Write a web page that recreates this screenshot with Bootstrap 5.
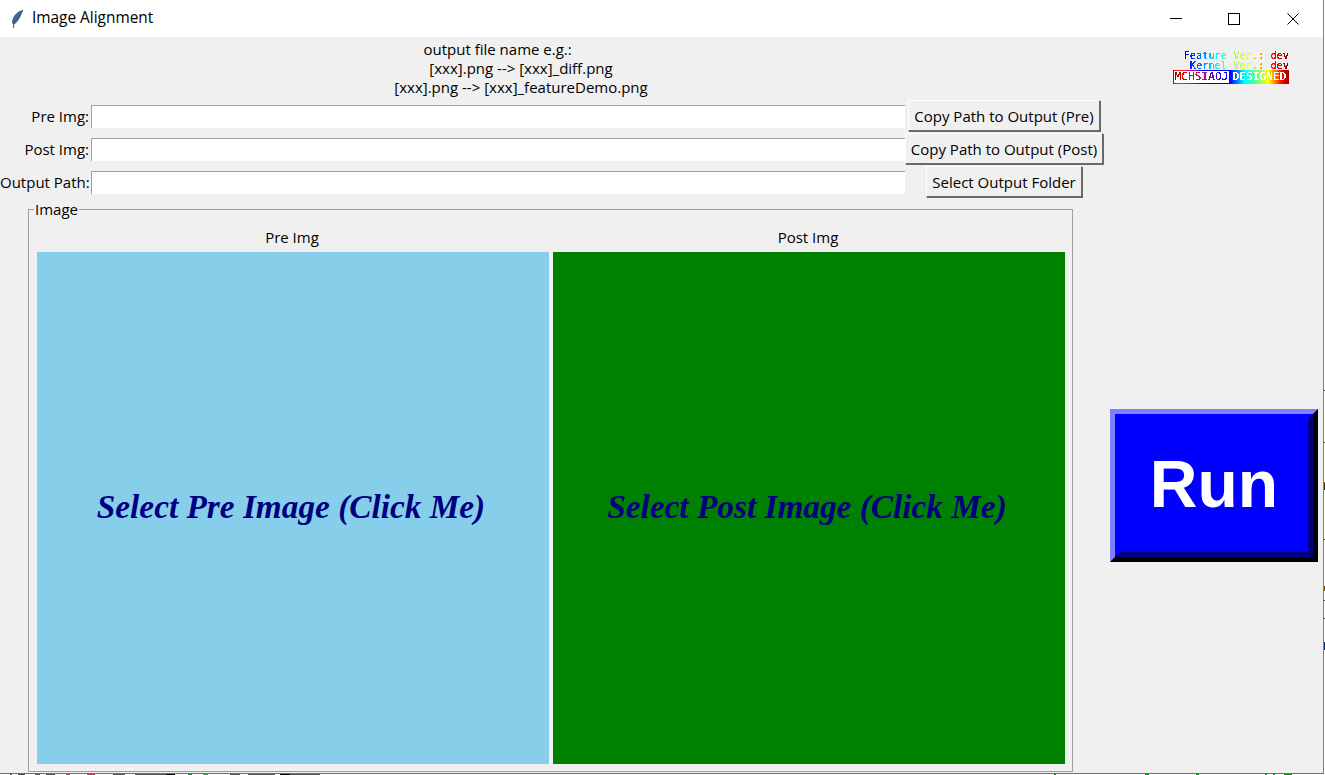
<!DOCTYPE html>
<html lang="en">
<head>
<meta charset="utf-8">
<title>Image Alignment</title>
<link href="https://cdn.jsdelivr.net/npm/bootstrap@5.3.0/dist/css/bootstrap.min.css" rel="stylesheet">
<style>
html,body{margin:0;height:775px;overflow:hidden}
html{background:#fff}
body{font-family:"Open Sans","Noto Sans",sans-serif;font-size:15px;line-height:19px;color:#000;background:#fff linear-gradient(180deg,#fff 0 390px,#333 390px 391px,#fff 391px 442px,#333 442px 443px,#fff 443px 482px,#a06020 482px 483px,#333 483px 490px,#fff 490px 539px,#333 539px 540px,#fff 540px 586px,#805010 586px 591px,#fff 591px 600px,#333 600px 601px,#fff 601px 618px,#333 618px 619px,#fff 619px 642px,#103070 642px 650px,#fff 650px) no-repeat 1324px 0/1px 775px}
.app-window{width:1324px;height:774px;border-right:1px solid #808080;border-bottom:1px solid #707070;background:#f0f0f0}
.title-bar{height:37px;background:#fff;padding-left:10px}
.title-text{margin-left:8px;font-size:15.4px;padding-bottom:2px}
.win-btn{width:58px;height:37px}
.win-close{width:60px}
.client{height:736px}
.left-pane{width:1107px}
.note-area{height:60px;padding-top:3px;padding-left:391px;width:260px;box-sizing:content-box}
.note-line{white-space:nowrap;text-align:center;height:19px;display:flex;justify-content:center}
.form-line{height:33px}
.form-label-text{width:91px;text-align:right;padding-right:2px;white-space:nowrap}
.path-input{width:814px;height:23px;background:#fff;border:0;border-left:1px solid #a0a0a0;border-top:1px solid #a0a0a0;padding:0;border-radius:0}
.tk-btn{height:31px;background:#f0f0f0;border:1px solid;border-color:#fff #696969 #696969 #fff;box-shadow:1px 1px 0 #696969;font-size:15px;line-height:19px;padding:1px 0 0;color:#000;border-radius:0;white-space:nowrap}
.slot{width:198px}
.btn-pre{width:192px}
.btn-post{width:199px}
.btn-out{width:156px}
.img-group{width:1045px;height:563px;margin-left:28px;margin-top:10px;border:1px solid #a0a0a0;padding:0 7px 7px 8px}
.group-legend{margin-top:-10px;margin-left:-3px;padding:0 1px;background:#f0f0f0;width:fit-content;height:19px}
.img-col{width:512px}
.img-col-title{height:33px;padding:9px 2px 0 0;text-align:center}
.img-face{width:512px;height:512px;padding:0 4px 4px 0;font-family:"Liberation Serif",serif;font-weight:700;font-style:italic;font-size:33.3px;color:#000080;cursor:pointer}
.face-pre{background:#87ceeb}
.face-post{background:#008000}
.right-pane{width:216px}
.logo-box{width:116px;margin-left:66px;margin-top:13px;font-family:"DejaVu Sans Mono",monospace;font-size:10.3px;height:34px}
.logo-text{background:linear-gradient(90deg,#00008f,#0000ff 12%,#00ffff 38%,#80ff80 50%,#ffff00 65%,#ff0000 88%,#800000);-webkit-background-clip:text;background-clip:text;color:transparent;text-align:right;height:10px;line-height:10px;white-space:pre;filter:url(#crisp)}
.logo-tag{height:14px;font-size:11.2px}
.tag-left{width:57px;padding:1px;background:linear-gradient(90deg,#c00000,#ff3000 12%,#d000a0 30%,#0000e0 55%,#0000ff)}
.tag-inner{background:#fff;height:12px;line-height:12px;display:flex;justify-content:center}
.tag-inner span{background:linear-gradient(90deg,#900000,#ff0000 25%,#b01080 55%,#0000ff 90%);-webkit-background-clip:text;background-clip:text;color:transparent;flex:none;filter:url(#crisp)}
.tag-right{flex:1;background:linear-gradient(90deg,#0000ff,#00ffff 25%,#60ff90 45%,#ffff00 65%,#ff0000 88%,#a00000);line-height:14px;display:flex;justify-content:center}
.tag-right span{color:#fff;flex:none;filter:url(#crisp)}
.run-btn{width:208px;height:153px;margin-left:3px;margin-top:325px;background:#0000ff;color:#fff;font-family:"Liberation Sans",sans-serif;font-weight:700;font-size:66px;line-height:1;padding:0;border-width:5px;border-style:solid;border-color:#8080ff #000 #000 #8080ff;border-radius:0}
.run-face{border:5px solid;border-color:#0000ff #000080 #000080 #0000ff;width:100%;height:100%;padding-bottom:3px}
.bottom-debris{height:1px;background:linear-gradient(90deg,#fff 0 10px,#444 10px 12px,#fff 12px 18px,#444 18px 25px,#fff 25px 35px,#555 35px 40px,#fff 40px 46px,#555 46px 55px,#fff 55px 66px,#a06070 66px 70px,#fff 70px 87px,#b04050 87px 95px,#fff 95px 113px,#555 113px 125px,#fff 125px 135px,#555 135px 165px,#000 167px 175px,#fff 175px 188px,#208040 188px 192px,#fff 192px 203px,#40a040 203px 208px,#fff 208px 230px,#555 230px 240px,#fff 240px 248px,#555 248px 275px,#fff 275px 280px,#000 280px 290px,#555 290px 320px,#fff 320px 1054px,#108010 1054px 1056px,#fff 1056px 1145px,#108010 1145px 1149px,#fff 1149px 1196px,#108010 1196px 1199px,#fff 1199px 1265px,#108010 1265px 1267px,#fff 1267px 1273px,#108010 1273px 1275px,#fff 1275px 1284px,#108010 1284px 1292px,#fff 1292px)}
.svg-defs{width:0;height:0;display:block;overflow:hidden}
</style>
</head>
<body>
<svg class="svg-defs" aria-hidden="true"><filter id="crisp" x="-5%" y="0" width="110%" height="100%" color-interpolation-filters="sRGB"><feComponentTransfer><feFuncA type="discrete" tableValues="0 1 1"/></feComponentTransfer></filter></svg>
<div class="app-window d-flex flex-column">
  <div class="title-bar d-flex align-items-center flex-shrink-0">
    <svg width="14" height="20" viewBox="0 0 14 20" aria-hidden="true"><path d="M13 1C8 2 3.500 6 2.500 11C2.200 13 2.500 14.500 3.200 15.500C7 14.500 10 10 13 1Z" fill="#3d6a9e"/><path d="M13 1C10 6 6 11 3.600 16L3.700 19" stroke="#555" stroke-width="1" fill="none"/><path d="M2.500 11C2.200 13 2.500 14.500 3.200 15.500L5 14L3.500 10Z" fill="#555"/></svg>
    <span class="title-text">Image Alignment</span>
    <div class="ms-auto d-flex">
      <div class="win-btn d-flex align-items-center justify-content-center"><svg width="12" height="12" viewBox="0 0 12 12"><path d="M0 5.500H12" stroke="#000"/></svg></div>
      <div class="win-btn d-flex align-items-center justify-content-center"><svg width="12" height="12" viewBox="0 0 12 12"><rect x=".5" y=".5" width="11" height="11" fill="none" stroke="#000"/></svg></div>
      <div class="win-btn win-close d-flex align-items-center justify-content-center"><svg width="12" height="12" viewBox="0 0 12 12"><path d="M.5 .5L11.500 11.500M11.500 .5L.5 11.500" stroke="#000"/></svg></div>
    </div>
  </div>
  <div class="client d-flex">
    <div class="left-pane">
      <div class="note-area">
        <div class="note-line">output file name e.g.:&nbsp;&nbsp;&nbsp;&nbsp;&nbsp;&nbsp;&nbsp;&nbsp;&nbsp;&nbsp;&nbsp;&nbsp;</div>
        <div class="note-line">[xxx].png --&gt; [xxx]_diff.png</div>
        <div class="note-line">[xxx].png --&gt; [xxx]_featureDemo.png</div>
      </div>
      <div class="form-line d-flex align-items-center">
        <div class="form-label-text">Pre Img:</div>
        <input class="path-input" type="text" aria-label="Pre Img">
        <div class="slot d-flex justify-content-center align-self-start"><button class="tk-btn btn-pre" type="button">Copy Path to Output (Pre)</button></div>
      </div>
      <div class="form-line d-flex align-items-center">
        <div class="form-label-text">Post Img:</div>
        <input class="path-input" type="text" aria-label="Post Img">
        <div class="slot d-flex justify-content-center align-self-start"><button class="tk-btn btn-post" type="button">Copy Path to Output (Post)</button></div>
      </div>
      <div class="form-line d-flex align-items-center">
        <div class="form-label-text">Output Path:</div>
        <input class="path-input" type="text" aria-label="Output Path">
        <div class="slot d-flex justify-content-center align-self-start"><button class="tk-btn btn-out" type="button">Select Output Folder</button></div>
      </div>
      <div class="img-group">
        <div class="group-legend">Image</div>
        <div class="d-flex justify-content-between">
          <div class="img-col">
            <div class="img-col-title">Pre Img</div>
            <div class="img-face face-pre d-flex align-items-center justify-content-center">Select Pre Image (Click Me)</div>
          </div>
          <div class="img-col">
            <div class="img-col-title">Post Img</div>
            <div class="img-face face-post d-flex align-items-center justify-content-center">Select Post Image (Click Me)</div>
          </div>
        </div>
      </div>
    </div>
    <div class="right-pane">
      <div class="logo-box">
        <div class="logo-text">Feature Ver.: dev</div>
        <div class="logo-text">Kernel Ver.: dev</div>
        <div class="logo-tag d-flex">
          <div class="tag-left"><div class="tag-inner"><span>MCHSIAOJ</span></div></div>
          <div class="tag-right"><span>DESIGNED</span></div>
        </div>
      </div>
      <button class="run-btn d-block" type="button"><span class="run-face d-flex align-items-center justify-content-center">Run</span></button>
    </div>
  </div>
</div>
<div class="bottom-debris"></div>
</body>
</html>
